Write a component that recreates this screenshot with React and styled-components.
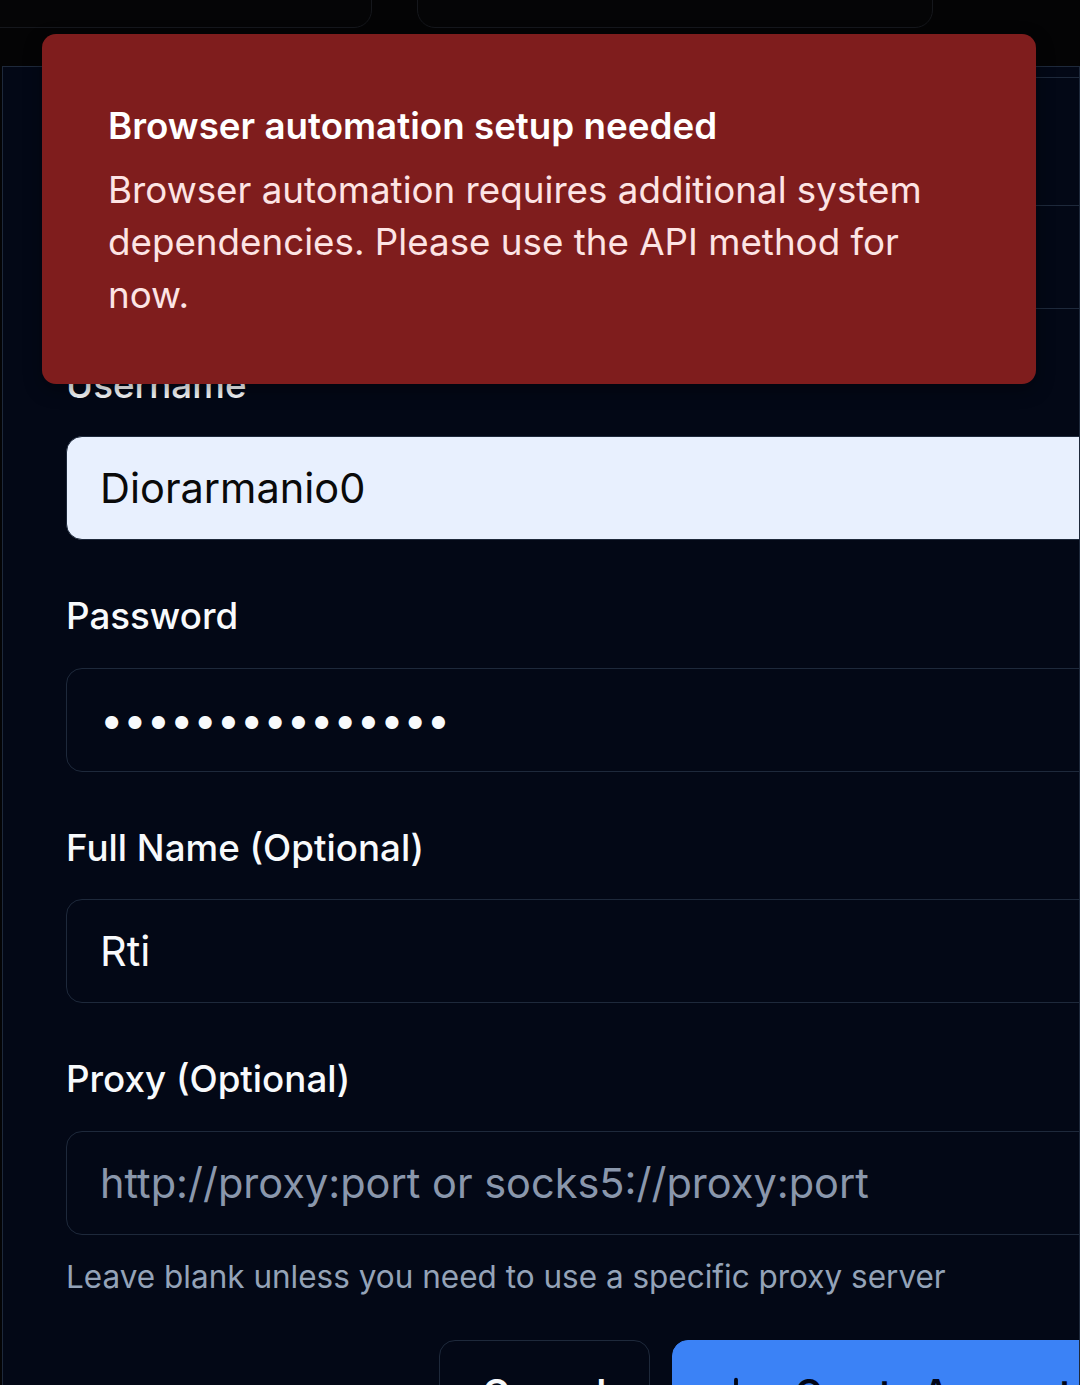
import React from "react";
import styled, { createGlobalStyle } from "styled-components";
import { Plus } from "lucide-react";

const GlobalStyle = createGlobalStyle`
  html, body {
    margin: 0;
    padding: 0;
    background: #040405;
    overflow: hidden;
  }
  body {
    font-family: Inter, "Noto Sans", sans-serif;
    -webkit-font-smoothing: antialiased;
  }
`;

const Page = styled.div`
  width: 1080px;
  height: 1385px;
  overflow: hidden;
  position: relative;
`;

const TopCards = styled.div`
  display: flex;
  gap: 45px;
  height: 26px;
  margin-left: -30px;
`;

const TopCard = styled.div`
  width: ${(p) => p.w}px;
  height: 60px;
  margin-top: -34px;
  border: 1px solid #15171c;
  border-radius: 18px;
  background: #050506;
`;

const Panel = styled.div`
  margin: 40px 0 0 2px;
  width: 1076px;
  height: 1400px;
  background: #030816;
  border: 1px solid #1e293b;
  border-right-width: 2px;
  overflow: hidden;
`;

const TopStrip = styled.div`
  height: 10px;
  margin-left: 63px;
  border-bottom: 1px solid #1e293b;
`;

const Form = styled.div`
  width: 1049px;
  padding: 49px 0 0 63px;
  display: flex;
  flex-direction: column;
  gap: 50px;
`;

const Field = styled.div`
  display: flex;
  flex-direction: column;
  gap: 25px;
`;

const Label = styled.label`
  font-size: 36.75px;
  line-height: 52.5px;
  font-weight: 500;
  color: #f8fafc;
`;

const Input = styled.input`
  box-sizing: border-box;
  height: 104px;
  width: 100%;
  padding: 0 33px;
  border: 1.5px solid #1e293b;
  border-radius: 16px;
  background: ${(p) => (p.$autofill ? "#e8f0fe" : "transparent")};
  color: ${(p) => (p.$autofill ? "#0a0a0a" : "#f8fafc")};
  font-family: Inter, sans-serif;
  font-size: 41.5px;
  letter-spacing: 0;
  outline: none;
  &::placeholder {
    color: #8a97ac;
  }
`;

const Hint = styled.p`
  margin: -4px 0 0;
  font-size: 31.5px;
  line-height: 42px;
  color: #94a3b8;
`;

const Actions = styled.div`
  display: flex;
  justify-content: flex-end;
  gap: 22px;
  margin-top: -8px;
`;

const Button = styled.button`
  box-sizing: border-box;
  height: 105px;
  display: flex;
  align-items: center;
  gap: 38px;
  padding: 0 ${(p) => (p.$primary ? "42px" : "43px")};
  border-radius: 16px;
  border: 1.5px solid ${(p) => (p.$primary ? "#3b82f6" : "#1e293b")};
  background: ${(p) => (p.$primary ? "#3b82f6" : "transparent")};
  color: ${(p) => (p.$primary ? "#020617" : "#f8fafc")};
  font-family: Inter, sans-serif;
  font-size: 36.75px;
  font-weight: 600;
  white-space: nowrap;
`;

const Toast = styled.div`
  position: absolute;
  top: 34px;
  left: 42px;
  width: 994px;
  box-sizing: border-box;
  padding: 66px 66px 63px;
  background: #7f1d1d;
  border-radius: 14px;
  box-shadow: 0 6px 18px rgba(0, 0, 0, 0.35);
  display: flex;
  flex-direction: column;
  gap: 11px;
`;

const ToastTitle = styled.div`
  font-size: 36.75px;
  line-height: 52.5px;
  font-weight: 600;
  color: #ffffff;
`;

const ToastText = styled.div`
  font-size: 36.75px;
  line-height: 52.5px;
  color: #fde4e4;
`;

const App = () => {
  return (
    <Page>
      <GlobalStyle />
      <TopCards>
        <TopCard w={400} />
        <TopCard w={514} />
      </TopCards>
      <Panel>
        <TopStrip />
        <Form>
          <Field>
            <Label>Email</Label>
            <Input readOnly defaultValue="" />
          </Field>
          <Field>
            <Label>Username</Label>
            <Input $autofill readOnly defaultValue="Diorarmanio0" />
          </Field>
          <Field>
            <Label>Password</Label>
            <Input type="password" readOnly defaultValue="passwordpasswor" />
          </Field>
          <Field>
            <Label>Full Name (Optional)</Label>
            <Input readOnly defaultValue="Rti" />
          </Field>
          <Field>
            <Label>Proxy (Optional)</Label>
            <Input readOnly placeholder="http://proxy:port or socks5://proxy:port" />
            <Hint>Leave blank unless you need to use a specific proxy server</Hint>
          </Field>
          <Actions>
            <Button>Cancel</Button>
            <Button $primary>
              <Plus size={42} strokeWidth={2.2} />
              Create Account
            </Button>
          </Actions>
        </Form>
      </Panel>
      <Toast>
        <ToastTitle>Browser automation setup needed</ToastTitle>
        <ToastText>
          Browser automation requires additional system dependencies. Please use
          the API method for now.
        </ToastText>
      </Toast>
    </Page>
  );
};

export default App;
